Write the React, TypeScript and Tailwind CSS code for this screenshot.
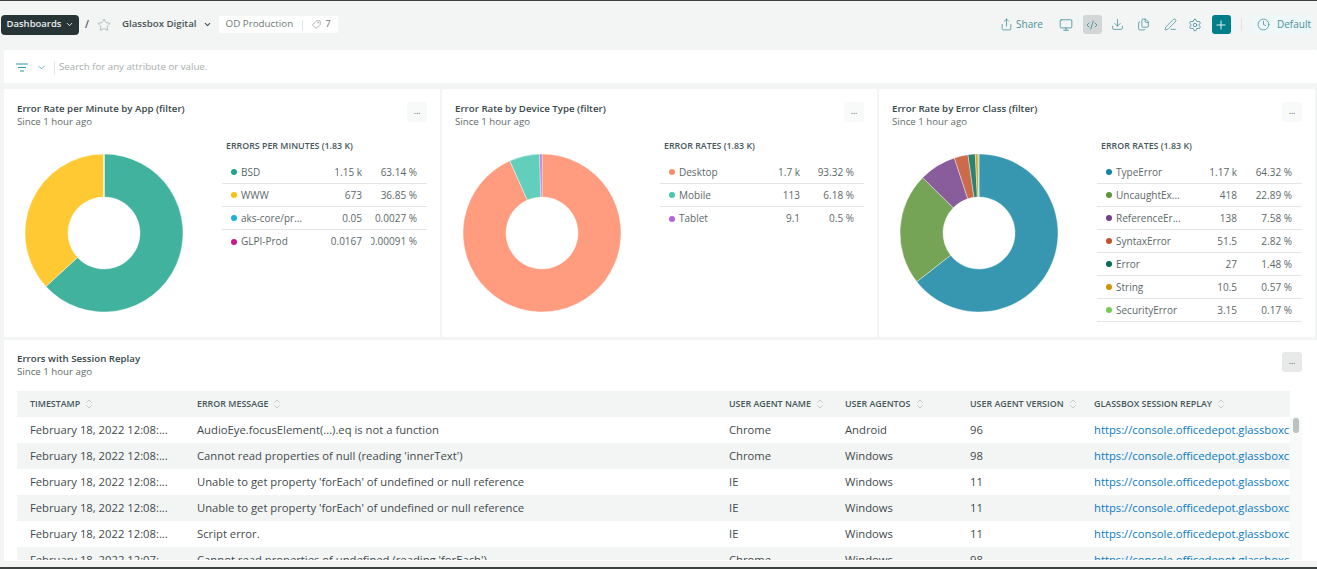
import {
  ChevronDown,
  ChevronsUpDown,
  Clock,
  CodeXml,
  Download,
  Files,
  Monitor,
  PenLine,
  Plus,
  Settings,
  Share,
  Star,
  Tag,
} from "lucide-react"

type Row = { name: string; color: string; value: string; pct: string; share: number }

const appRows: Row[] = [
  { name: "BSD", color: "#20a58d", value: "1.15 k", pct: "63.14 %", share: 63.14 },
  { name: "WWW", color: "#ffbf0f", value: "673", pct: "36.85 %", share: 36.85 },
  { name: "aks-core/pr...", color: "#16b2dc", value: "0.05", pct: "0.0027 %", share: 0.0027 },
  { name: "GLPI-Prod", color: "#c8198c", value: "0.0167", pct: "0.00091 %", share: 0.00091 },
]

const deviceRows: Row[] = [
  { name: "Desktop", color: "#ff8b68", value: "1.7 k", pct: "93.32 %", share: 93.32 },
  { name: "Mobile", color: "#47c7b0", value: "113", pct: "6.18 %", share: 6.18 },
  { name: "Tablet", color: "#b564db", value: "9.1", pct: "0.5 %", share: 0.5 },
]

const classRows: Row[] = [
  { name: "TypeError", color: "#1485a2", value: "1.17 k", pct: "64.32 %", share: 64.32 },
  { name: "UncaughtEx...", color: "#5e943a", value: "418", pct: "22.89 %", share: 22.89 },
  { name: "ReferenceEr...", color: "#743f89", value: "138", pct: "7.58 %", share: 7.58 },
  { name: "SyntaxError", color: "#c2512d", value: "51.5", pct: "2.82 %", share: 2.82 },
  { name: "Error", color: "#066c58", value: "27", pct: "1.48 %", share: 1.48 },
  { name: "String", color: "#d19404", value: "10.5", pct: "0.57 %", share: 0.57 },
  { name: "SecurityError", color: "#79c85a", value: "3.15", pct: "0.17 %", share: 0.17 },
]

const tableRows = [
  ["February 18, 2022 12:08:...", "AudioEye.focusElement(...).eq is not a function", "Chrome", "Android", "96"],
  ["February 18, 2022 12:08:...", "Cannot read properties of null (reading 'innerText')", "Chrome", "Windows", "98"],
  ["February 18, 2022 12:08:...", "Unable to get property 'forEach' of undefined or null reference", "IE", "Windows", "11"],
  ["February 18, 2022 12:08:...", "Unable to get property 'forEach' of undefined or null reference", "IE", "Windows", "11"],
  ["February 18, 2022 12:08:...", "Script error.", "IE", "Windows", "11"],
  ["February 18, 2022 12:07:...", "Cannot read properties of undefined (reading 'forEach')", "Chrome", "Windows", "98"],
]

const columns = [
  { label: "TIMESTAMP", width: "w-[167px]" },
  { label: "ERROR MESSAGE", width: "w-[532px]" },
  { label: "USER AGENT NAME", width: "w-[116px]" },
  { label: "USER AGENTOS", width: "w-[125px]" },
  { label: "USER AGENT VERSION", width: "w-[124px]" },
  { label: "GLASSBOX SESSION REPLAY", width: "flex-1" },
]

function Donut({ rows }: { rows: Row[] }) {
  const outer = 79
  const inner = 36
  const total = rows.reduce((sum, r) => sum + r.share, 0)
  let start = 0
  const slices = rows.map((r) => {
    const a0 = (start / total) * Math.PI * 2
    start += r.share
    const a1 = (start / total) * Math.PI * 2
    const large = a1 - a0 > Math.PI ? 1 : 0
    const pt = (rad: number, a: number) => `${(rad * Math.sin(a)).toFixed(2)} ${(-rad * Math.cos(a)).toFixed(2)}`
    const d = `M${pt(outer, a0)} A${outer} ${outer} 0 ${large} 1 ${pt(outer, a1)} L${pt(inner, a1)} A${inner} ${inner} 0 ${large} 0 ${pt(inner, a0)} Z`
    return <path key={r.name} d={d} fill={r.color} fillOpacity={0.85} stroke="#fff" strokeWidth={0.4} />
  })
  return (
    <svg width="160" height="160" viewBox="-80 -80 160 160" className="shrink-0">
      {slices}
    </svg>
  )
}

function MoreButton({ dark }: { dark?: boolean }) {
  return (
    <div
      className={`flex h-[20px] w-[20px] items-center justify-center rounded-[3px] pb-[3px] text-[9px] tracking-tight text-[#5f6b6b] ${
        dark ? "bg-[#e8eaea]" : "bg-[#f8f9f9]"
      }`}
    >
      ...
    </div>
  )
}

function ChartCard({ title, legend, rows, lastLine, width }: { title: string; legend: string; rows: Row[]; lastLine?: boolean; width: string }) {
  return (
    <section className={`flex h-[248px] shrink-0 flex-col rounded-[2px] bg-white pl-[13px] pr-[13px] pt-[13px] ${width}`}>
      <div className="flex items-start justify-between">
        <div className="leading-[13px]">
          <div className="text-[9.7px] font-semibold text-[#37474a]">{title}</div>
          <div className="text-[9.7px] text-[#5f6b6b]">Since 1 hour ago</div>
        </div>
        <MoreButton />
      </div>
      <div className="mt-[9px] flex">
        <div className="ml-[7px] mt-[16px]">
          <Donut rows={rows} />
        </div>
        <div className="ml-[38px] mt-[3px] min-w-0 flex-1">
          <div className="pl-[4px] text-[8.85px] font-semibold leading-[13px] text-[#46575a]">{legend}</div>
          <div className="mt-[8px]">
            {rows.map((r, i) => (
              <div
                key={r.name}
                className={`flex h-[23px] items-center pl-[9px] pr-[10px] text-[10px] text-[#5c6868] ${
                  i < rows.length - 1 || lastLine ? "border-b border-[#e3e6e6]" : ""
                }`}
              >
                <span className="h-[6px] w-[6px] shrink-0 rounded-full" style={{ backgroundColor: r.color }} />
                <span className="ml-[4px] w-[78px] shrink-0 whitespace-nowrap">{r.name}</span>
                <span className="w-[43px] shrink-0 whitespace-nowrap text-right">{r.value}</span>
                <span className="ml-[9px] flex min-w-0 flex-1 justify-end overflow-hidden whitespace-nowrap">{r.pct}</span>
              </div>
            ))}
          </div>
        </div>
      </div>
    </section>
  )
}

export default function App() {
  return (
    <div className="flex h-[569px] w-[1317px] flex-col overflow-hidden border-t border-b-2 border-[#3c4142] bg-[#f3f5f5] font-['Open_Sans',sans-serif]">
      {/* top bar */}
      <header className="flex h-[49px] shrink-0 items-center pb-[2px] pl-[1px] pr-[6px]">
        <div className="flex h-[20px] w-[78px] items-center justify-center gap-[3px] rounded-[4px] bg-[#283536] text-[9.5px] font-semibold text-[#e8eeee]">
          Dashboards
          <ChevronDown size={9} strokeWidth={2.5} />
        </div>
        <span className="ml-[6px] text-[10px] font-semibold text-[#465354]">/</span>
        <Star size={14} strokeWidth={1} className="ml-[8px] text-[#8a9494]" />
        <span className="ml-[11px] text-[9.7px] font-semibold text-[#465354]">Glassbox Digital</span>
        <ChevronDown size={9} strokeWidth={3} className="ml-[6px] text-[#465354]" />
        <div className="ml-[7px] flex h-[17px] items-center rounded-[2px] bg-white pl-[7px] pr-[7px] text-[9.8px] text-[#6d7878]">
          OD Production
          <span className="ml-[9px] h-[10px] w-px bg-[#dfe3e3]" />
          <Tag size={9} strokeWidth={1.4} className="ml-[9px] -scale-x-100" />
          <span className="ml-[4px]">7</span>
        </div>
        <div className="ml-auto flex items-center text-[#2f8591]">
          <Share size={13} strokeWidth={1.3} />
          <span className="ml-[3px] text-[10px] text-[#4d8f98]">Share</span>
          <Monitor size={14} strokeWidth={1.3} className="ml-[16px]" />
          <div className="ml-[10px] flex h-[19px] w-[19px] items-center justify-center rounded-[3px] bg-[#d2d6d6]">
            <CodeXml size={12} strokeWidth={1.5} />
          </div>
          <Download size={13} strokeWidth={1.3} className="ml-[9px]" />
          <Files size={13} strokeWidth={1.3} className="ml-[13px]" />
          <PenLine size={13} strokeWidth={1.3} className="ml-[14px]" />
          <Settings size={14} strokeWidth={1.3} className="ml-[11px]" />
          <div className="ml-[10px] flex h-[19px] w-[19px] items-center justify-center rounded-[3px] bg-[#007e8a] text-white">
            <Plus size={14} strokeWidth={1.5} />
          </div>
          <span className="ml-[10px] h-[13px] w-px bg-[#dfe3e3]" />
          <div className="ml-[9px] flex h-[19px] items-center rounded-[3px] bg-[#eef8f9] pl-[6px]">
            <Clock size={13} strokeWidth={1.3} />
            <span className="ml-[7px] text-[10px] text-[#4d8f98]">Default</span>
          </div>
        </div>
      </header>

      {/* filter bar */}
      <div className="ml-[4px] flex h-[33px] shrink-0 items-center rounded-[2px] bg-white pl-[11px] pt-[2px]">
        <svg width="14" height="10" viewBox="0 0 14 10" fill="none" stroke="#2a9aa6" strokeWidth="1">
          <path d="M1 1h12M3 4.5h8M5 8h4" />
        </svg>
        <ChevronDown size={11} strokeWidth={1.5} className="ml-[7px] text-[#2a9aa6]" />
        <span className="ml-[7px] h-[12px] w-px bg-[#e3e6e6]" />
        <span className="ml-[4px] text-[9.7px] text-[#a6adad]">Search for any attribute or value.</span>
      </div>

      {/* chart row */}
      <div className="ml-[4px] mt-[6px] flex shrink-0 gap-[2px]">
        <ChartCard width="w-[436px]" title="Error Rate per Minute by App (filter)" legend="ERRORS PER MINUTES (1.83 K)" rows={appRows} />
        <ChartCard width="w-[435px]" title="Error Rate by Device Type (filter)" legend="ERROR RATES (1.83 K)" rows={deviceRows} />
        <ChartCard width="w-[436px]" title="Error Rate by Error Class (filter)" legend="ERROR RATES (1.83 K)" rows={classRows} lastLine />
      </div>

      {/* table card */}
      <section className="ml-[4px] mt-[3px] h-[221px] shrink-0 overflow-hidden bg-white pl-[13px] pr-[15px] pt-[12px]">
        <div className="flex items-start justify-between">
          <div className="leading-[13px]">
            <div className="text-[9.7px] font-semibold text-[#37474a]">Errors with Session Replay</div>
            <div className="text-[9.7px] text-[#5f6b6b]">Since 1 hour ago</div>
          </div>
          <MoreButton dark />
        </div>
        <div className="mt-[13px] flex h-[169px]">
          <div className="w-[1273px] shrink-0 overflow-hidden">
            <div className="flex h-[26px] items-center bg-[#f3f5f5] pl-[13px] text-[8.9px] font-semibold text-[#46575a]">
              {columns.map((c) => (
                <div key={c.label} className={`flex items-center gap-[3px] whitespace-nowrap ${c.width}`}>
                  {c.label}
                  <ChevronsUpDown size={12} strokeWidth={1} className="text-[#9aa3a3]" />
                </div>
              ))}
            </div>
            {tableRows.map((row, i) => (
              <div key={i} className={`flex h-[26px] items-center pl-[13px] text-[11.25px] text-[#3f4a4c] ${i % 2 ? "bg-[#f3f5f5]" : "bg-white"}`}>
                {row.map((cell, j) => (
                  <div key={j} className={`whitespace-nowrap ${columns[j].width}`}>
                    {cell}
                  </div>
                ))}
                <div className="flex-1 overflow-hidden whitespace-nowrap text-[#0b7ac4]">https://console.officedepot.glassboxcloud.com</div>
              </div>
            ))}
          </div>
          <div className="mt-[26px] w-[12px] shrink-0 bg-[#f8f9f9] pl-[3px] pt-[1px]">
            <div className="h-[15px] w-[6px] rounded-[3px] bg-[#bcc1c1]" />
          </div>
        </div>
      </section>
    </div>
  )
}
